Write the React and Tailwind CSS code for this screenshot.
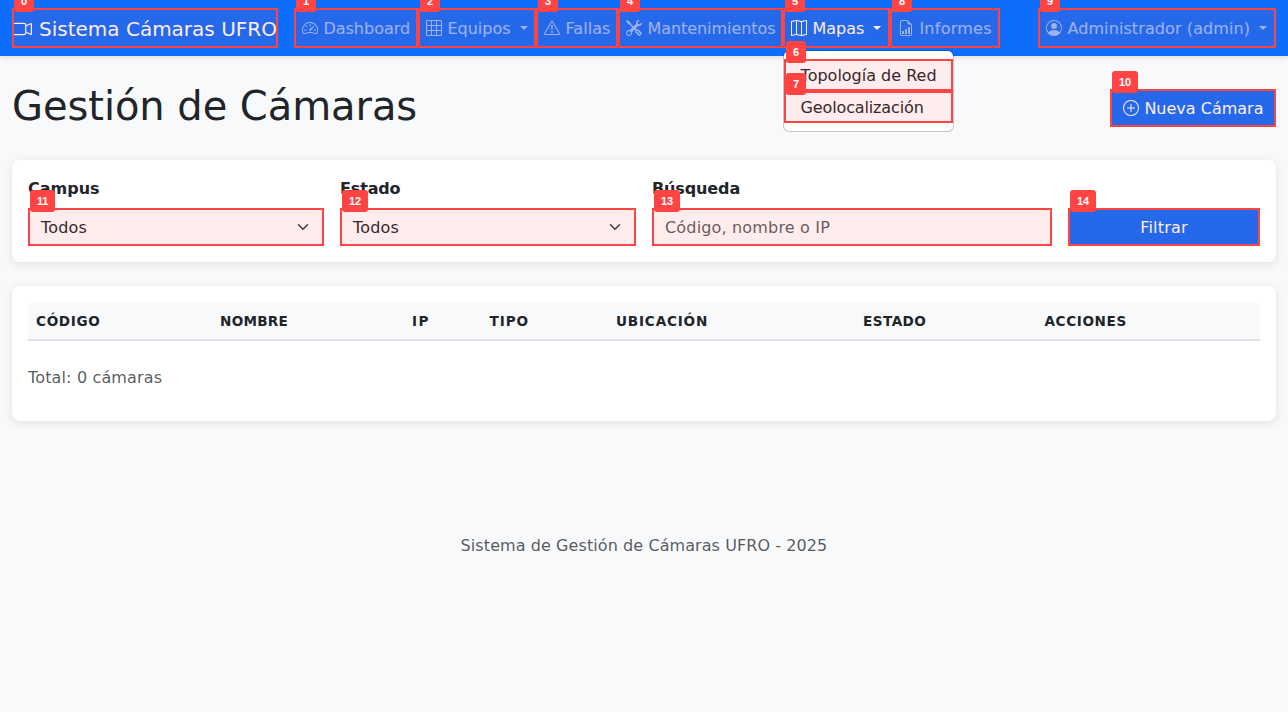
import React from "react";
import {
  BsCameraVideo,
  BsSpeedometer2,
  BsGrid3X3,
  BsExclamationTriangle,
  BsTools,
  BsMap,
  BsFileEarmarkBarGraph,
  BsPersonCircle,
  BsPlusCircle,
} from "react-icons/bs";

function Mark({ n, inset = "inset-0" }) {
  return (
    <span className={`pointer-events-none absolute ${inset} border-2 border-[#ff4444] bg-[#ff4444]/10`}>
      <span className="absolute -top-5 left-0 z-20 flex h-[22px] items-center rounded-[3px] bg-[#ff4444] px-[7px] font-['Liberation_Sans',Arial,sans-serif] text-[11px] leading-none font-bold tracking-[-0.2px] text-white">
        {n}
      </span>
    </span>
  );
}

function Caret() {
  return (
    <span className="ml-[9px] inline-block border-x-[4.8px] border-t-[4.8px] border-x-transparent border-t-current align-[4px]" />
  );
}

function NavItem({ n, icon: Icon, label, caret, active, width, tracking = "", children }) {
  return (
    <li className={`relative h-10 shrink-0 ${width}`}>
      <a className={`block px-2 pt-[9px] whitespace-nowrap ${active ? "text-white" : "text-white/55"} ${tracking}`}>
        <Icon className="mr-[5.4px] inline-block size-4 align-[-2px]" />
        {label}
        {caret && <Caret />}
      </a>
      <Mark n={n} />
      {children}
    </li>
  );
}

function MenuItem({ n, tracking = "", children }) {
  return (
    <li className={`relative h-8 pt-[5px] pl-[16.6px] leading-6 text-[#212529] ${tracking}`}>
      {children}
      <Mark n={n} />
    </li>
  );
}

function Field({ label, tracking = "", children }) {
  return (
    <div>
      <label className={`mb-[7px] block pt-px font-bold ${tracking}`}>{label}</label>
      {children}
    </div>
  );
}

function Select({ n }) {
  return (
    <div className="relative flex h-[38px] items-center justify-between rounded-md border border-[#dee2e6] bg-white px-3">
      <span className="pt-0.5 tracking-[0.15px]">Todos</span>
      <svg viewBox="0 0 16 16" className="h-3 w-4" fill="none" stroke="#343a40" strokeWidth="2" strokeLinecap="round" strokeLinejoin="round">
        <path d="m2 5 6 6 6-6" />
      </svg>
      <Mark n={n} inset="-inset-px" />
    </div>
  );
}

const columns = [
  ["Código", "w-[184px] tracking-[0.65px]"],
  ["Nombre", "w-[192px] tracking-[0.25px]"],
  ["IP", "w-[77.5px] tracking-[1.5px]"],
  ["Tipo", "w-[126.5px] tracking-[0.9px]"],
  ["Ubicación", "w-[247px] tracking-[0.8px]"],
  ["Estado", "w-[181.5px] tracking-[0.45px]"],
  ["Acciones", "w-[223.5px] tracking-[0.6px]"],
];

const cardClass = "mb-6 rounded-lg bg-white p-4 shadow-[0_2px_10px_rgba(0,0,0,0.1)]";

export default function App() {
  return (
    <div className="h-[712px] overflow-hidden bg-[#f8f9fa] font-['DejaVu_Sans',Verdana,sans-serif] text-base leading-6 text-[#212529]">
      <nav className="relative z-10 flex h-14 items-center bg-[#0d6efd] px-3 shadow-[0_2px_4px_rgba(0,0,0,0.1)]">
        <a className="relative mr-4 block h-10 w-[266px] shrink-0 pt-[6px] text-xl leading-[30px] whitespace-nowrap text-white">
          <BsCameraVideo className="mr-[7px] inline-block size-5 align-[-2.5px]" />
          Sistema Cámaras UFRO
          <Mark n={0} />
        </a>
        <ul className="flex">
          <NavItem n={1} icon={BsSpeedometer2} label="Dashboard" width="w-[124px]" />
          <NavItem n={2} icon={BsGrid3X3} label="Equipos" caret width="w-[118px]" />
          <NavItem n={3} icon={BsExclamationTriangle} label="Fallas" width="w-[82px]" tracking="tracking-[0.1px]" />
          <NavItem n={4} icon={BsTools} label="Mantenimientos" width="w-[165px]" tracking="tracking-[-0.05px]" />
          <NavItem n={5} icon={BsMap} label="Mapas" caret active width="w-[107px]">
            <ul className="absolute top-[42px] left-0 w-[171px] rounded-md border border-black/20 bg-white bg-clip-padding py-2">
              <MenuItem n={6}>Topología de Red</MenuItem>
              <MenuItem n={7} tracking="tracking-[-0.14px]">Geolocalización</MenuItem>
            </ul>
          </NavItem>
          <NavItem n={8} icon={BsFileEarmarkBarGraph} label="Informes" width="w-[110px]" tracking="tracking-[0.25px]" />
        </ul>
        <ul className="ml-auto flex">
          <NavItem n={9} icon={BsPersonCircle} label="Administrador (admin)" caret width="w-[238px]" tracking="tracking-[0.1px]" />
        </ul>
      </nav>

      <main className="px-3 pt-6">
        <header className="mb-6 flex h-14 items-center justify-between">
          <h1 className="mb-1 text-[40px] leading-[48px] font-normal tracking-[-0.06px]">Gestión de Cámaras</h1>
          <button className="relative h-[38px] w-[166px] rounded-md bg-[#0d6efd] px-[13px] pt-0.5 text-left whitespace-nowrap text-white">
            <BsPlusCircle className="mr-[5.4px] inline-block size-4 align-[-2px]" />
            Nueva Cámara
            <Mark n={10} />
          </button>
        </header>

        <section className={cardClass}>
          <form className="grid grid-cols-[296px_296px_400px_192px] items-end gap-4">
            <Field label="Campus">
              <Select n={11} />
            </Field>
            <Field label="Estado" tracking="tracking-[-0.15px]">
              <Select n={12} />
            </Field>
            <Field label="Búsqueda" tracking="tracking-[-0.12px]">
              <div className="relative flex h-[38px] items-center rounded-md border border-[#dee2e6] bg-white px-3 pt-0.5 tracking-[0.17px] text-[#212529]/75">
                Código, nombre o IP
                <Mark n={13} inset="-inset-px" />
              </div>
            </Field>
            <button type="button" className="relative h-[38px] rounded-md bg-[#0d6efd] pt-0.5 tracking-[0.2px] text-white">
              Filtrar
              <Mark n={14} />
            </button>
          </form>
        </section>

        <section className={`${cardClass} h-[135px]`}>
          <div className="overflow-hidden rounded-t-lg">
            <table className="w-full table-fixed border-collapse">
              <thead>
                <tr className="h-[38px] border-b-2 border-[#dee2e6] bg-[#f8f9fa]">
                  {columns.map(([name, style]) => (
                    <th key={name} className={`${style} px-2 text-left text-[13.6px] leading-5 font-bold uppercase`}>
                      {name}
                    </th>
                  ))}
                </tr>
              </thead>
            </table>
          </div>
          <p className="mt-[25px] tracking-[0.15px] text-[#212529]/75">Total: 0 cámaras</p>
        </section>
      </main>

      <footer className="mt-[113px] text-center tracking-[0.08px] text-[#212529]/75">
        Sistema de Gestión de Cámaras UFRO - 2025
      </footer>
    </div>
  );
}
